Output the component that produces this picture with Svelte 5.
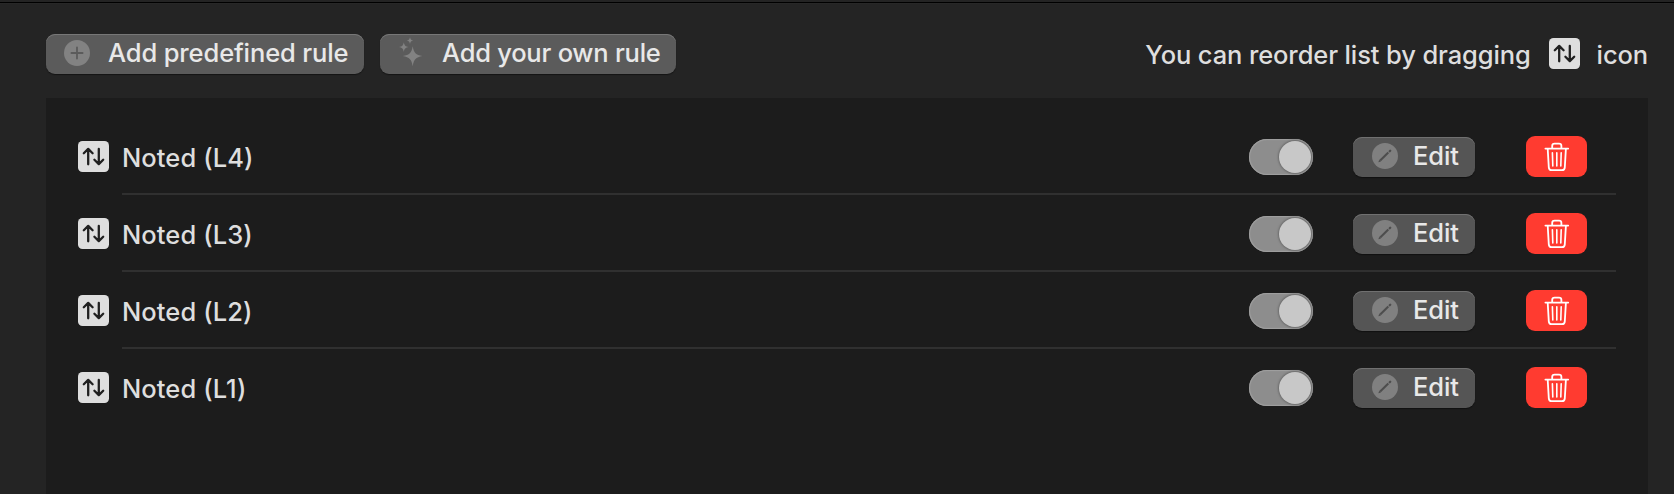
<script>
  const rules = ['Noted (L4)', 'Noted (L3)', 'Noted (L2)', 'Noted (L1)'];
</script>

{#snippet reorder()}
  <svg class="reorder" viewBox="0 0 31 31" width="31" height="31">
    <rect width="31" height="31" rx="4.5" fill="#dedede" />
    <path d="M10.2 23.3V8.2M5.8 12.2L10.2 7.9L14.6 12.2M20.8 7.9V23M16.4 18.8L20.8 23.1L25.2 18.8" fill="none" stroke="#202020" stroke-width="2.3" stroke-linecap="round" stroke-linejoin="round" />
  </svg>
{/snippet}

<main>
  <header>
    <button class="btn first">
      <svg width="26" height="26" viewBox="0 0 26 26">
        <circle cx="13" cy="13" r="13" fill="#828282" />
        <path d="M13 7.4V18.6M7.4 13H18.6" stroke="#5b5b5b" stroke-width="1.8" stroke-linecap="round" />
      </svg>
      <span class="t1">Add predefined rule</span>
    </button>
    <button class="btn second">
      <svg width="24" height="30" viewBox="0 0 24 30" fill="#828282">
        <path d="M13.7 9.2C14.9 15.8 16.8 17.8 23.4 19.1C16.8 20.4 14.9 22.4 13.7 29.2C12.5 22.4 10.6 20.4 3.8 19.1C10.6 17.8 12.5 15.8 13.7 9.2Z" />
        <path d="M4.8 5.2C5.5 8.5 6.4 9.4 9.6 10.1C6.4 10.8 5.5 11.7 4.8 15C4.1 11.7 3.2 10.8 0 10.1C3.2 9.4 4.1 8.5 4.8 5.2Z" />
        <path d="M11 .3C11.5 2.5 12.1 3.1 14.2 3.6C12.1 4.1 11.5 4.7 11 6.9C10.5 4.7 9.9 4.1 7.8 3.6C9.9 3.1 10.5 2.5 11 .3Z" />
      </svg>
      <span class="t2">Add your own rule</span>
    </button>
    <p class="hint">
      <span class="t3">You can reorder list by dragging</span>
      {@render reorder()}
      <span class="t4">icon</span>
    </p>
  </header>
  <section>
    {#each rules as rule}
      <div class="row">
        {@render reorder()}
        <div class="body">
          <span class="name">{rule}</span>
          <span class="toggle"><i></i></span>
          <button class="btn edit">
            <svg width="26" height="26" viewBox="0 0 26 26">
              <circle cx="13" cy="13" r="13" fill="#808080" />
              <path d="M8.2 17.6L16.3 9.6" stroke="#4d4d4d" stroke-width="2.1" />
              <path d="M6.3 19.3L7.3 16.7L9 18.4Z" fill="#4d4d4d" />
              <path d="M17.7 8.2L18.2 7.7" stroke="#4d4d4d" stroke-width="2.3" stroke-linecap="round" />
            </svg>
            <span class="t5">Edit</span>
          </button>
          <button class="delete" aria-label="Delete">
            <svg width="26" height="30" viewBox="0 0 26 30" fill="none" stroke="#fff" stroke-width="1.8" stroke-linecap="round" stroke-linejoin="round">
              <path d="M1.4 6.6H24.2M8.2 6.4V4Q8.2 1.7 10.6 1.7H15Q17.4 1.7 17.4 4V6.4M3.7 6.8L4.8 25.4Q5 28.2 7.6 28.2H18Q20.6 28.2 20.8 25.4L21.9 6.8" />
              <path d="M8.4 10.8L8.8 24M12.8 10.8V24M17.2 10.8L16.8 24" stroke-width="1.6" />
            </svg>
          </button>
        </div>
      </div>
    {/each}
  </section>
</main>

<style>
  :global(body) { margin: 0; background: #242424; }
  main {
    box-sizing: border-box;
    height: 494px;
    padding: 0 26px 0 46px;
    overflow: hidden;
    display: flex;
    flex-direction: column;
    background: linear-gradient(#242424 2px, #000 2px, #000 3px, #2b2b2b 3px, #242424 4px);
    color: #dedede;
    font: 450 25.5px/32px Inter, sans-serif;
    letter-spacing: -0.12px;
    white-space: nowrap;
  }
  header { flex: none; display: flex; height: 64px; padding-top: 34px; align-items: flex-start; }
  button { display: flex; border: 0; margin: 0; font: inherit; letter-spacing: inherit; color: inherit; box-sizing: border-box; }
  .btn {
    height: 40px;
    border-radius: 9px;
    background: #5b5b5b;
    color: #e8e8e8;
    box-shadow: inset 0 1px 0 #777, 0 1px 1px #151515;
  }
  .btn svg { flex: none; }
  .first { width: 318px; padding: 6px 0 0 18px; gap: 18px; }
  .second { width: 296px; margin-left: 16px; padding: 3px 0 0 19px; gap: 19px; letter-spacing: -0.24px; }
  .second .t2 { margin-top: 3px; }
  .btn span { position: relative; top: -3px; }
  .hint { margin: 4px 0 0 auto; display: flex; }
  .hint span { padding-top: 1px; }
  .hint .reorder { margin: 0 17px 0 18px; }
  svg { display: block; }
  section { flex: 1; background: #1c1c1c; padding: 20px 32px 0; }
  .row { display: flex; height: 77px; }
  .row > .reorder { flex: none; margin: 23px 13px 0 0; }
  .body { flex: 1; display: flex; box-sizing: border-box; border-bottom: 2px solid #303030; padding-right: 29px; }
  .row:last-child .body { border-color: transparent; }
  .name { flex: 1; padding: 24px 0 0; letter-spacing: 0.08px; }
  .toggle {
    box-sizing: border-box;
    width: 64px;
    height: 36px;
    margin: 21px 40px 0 0;
    padding: 2px;
    border-radius: 18px;
    background: #8d8d8d;
    box-shadow: inset 0 0 1px 1px #a0a0a0;
    display: flex;
    justify-content: flex-end;
  }
  .toggle i { width: 32px; height: 32px; border-radius: 50%; background: #c8c8c8; box-shadow: 0 0 2px 1px #6b6b6b; }
  .edit { width: 122px; margin-top: 19px; padding: 6px 0 0 19px; gap: 15px; background: #555; box-shadow: inset 0 1px 0 #707070, 0 1px 1px #111; }
  .delete { width: 61px; height: 41px; margin: 18px 0 0 51px; padding: 6px 0 0 17.5px; border-radius: 9px; background: #ff3b30; }
</style>
